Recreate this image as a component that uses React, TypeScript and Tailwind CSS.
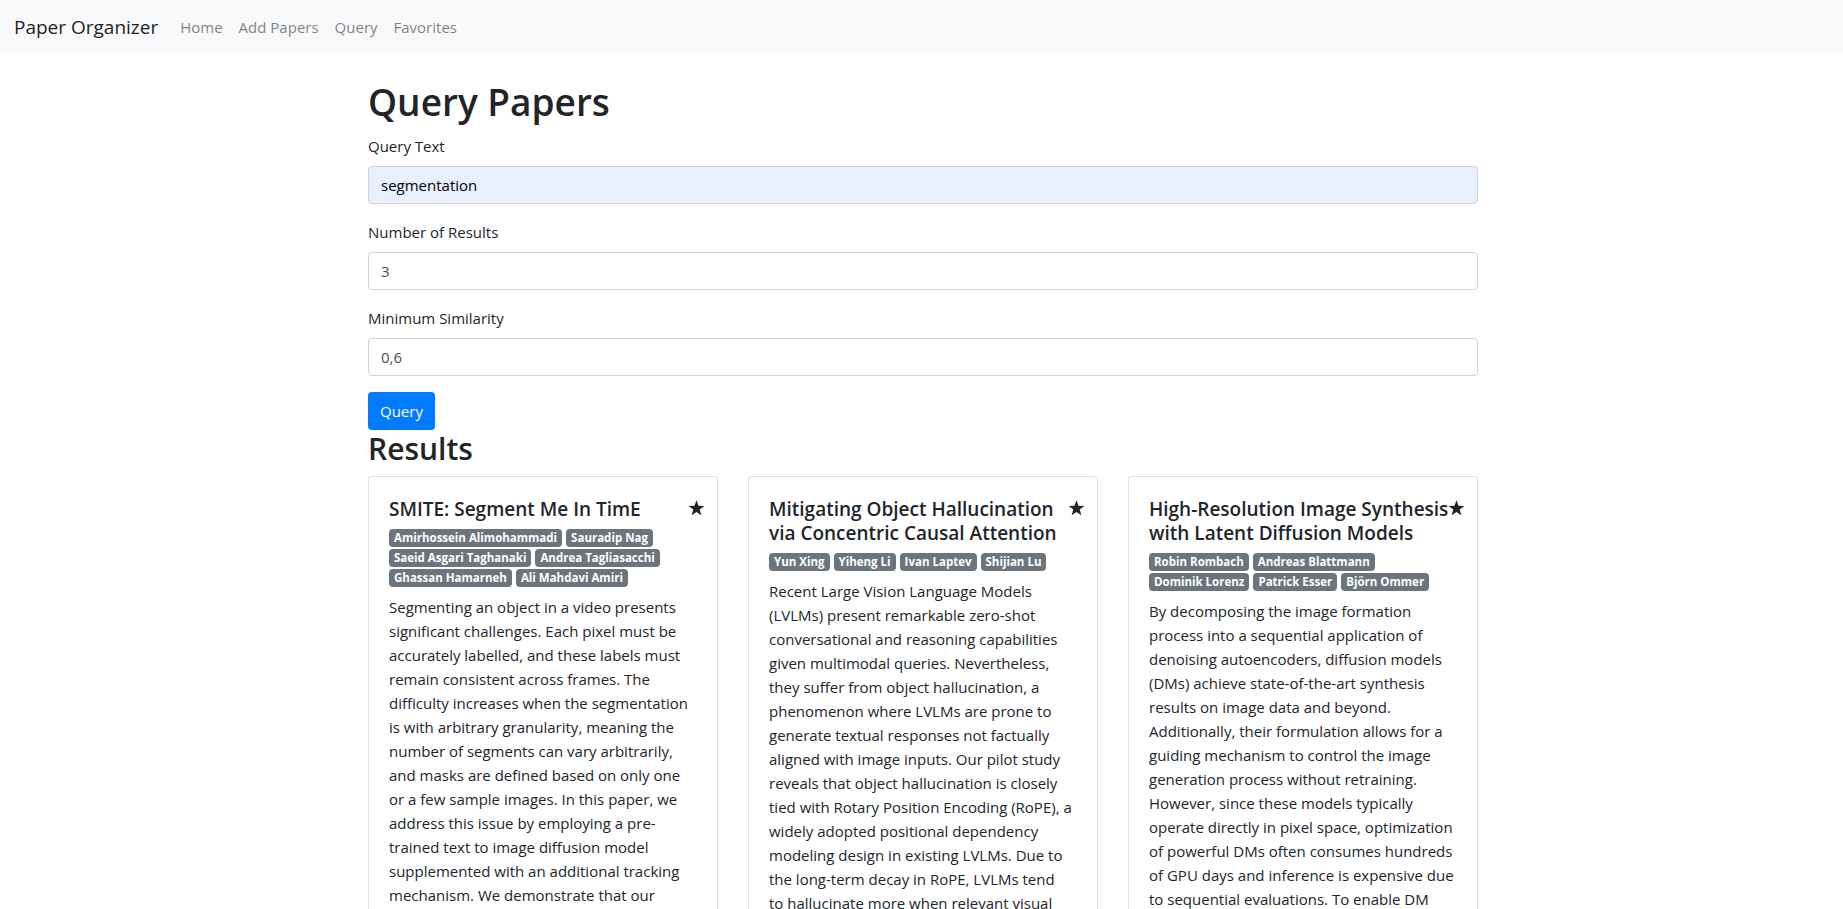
import React from "react";

type Paper = {
  title: string[];
  authors: string[][];
  lines: string[];
};

const papers: Paper[] = [
  {
    title: ["SMITE: Segment Me In TimE"],
    authors: [
      ["Amirhossein Alimohammadi", "Sauradip Nag"],
      ["Saeid Asgari Taghanaki", "Andrea Tagliasacchi"],
      ["Ghassan Hamarneh", "Ali Mahdavi Amiri"],
    ],
    lines: [
      "Segmenting an object in a video presents",
      "significant challenges. Each pixel must be",
      "accurately labelled, and these labels must",
      "remain consistent across frames. The",
      "difficulty increases when the segmentation",
      "is with arbitrary granularity, meaning the",
      "number of segments can vary arbitrarily,",
      "and masks are defined based on only one",
      "or a few sample images. In this paper, we",
      "address this issue by employing a pre-",
      "trained text to image diffusion model",
      "supplemented with an additional tracking",
      "mechanism. We demonstrate that our",
      "approach can effectively manage various",
      "segmentation scenarios and outperforms",
      "state-of-the-art alternatives.",
    ],
  },
  {
    title: ["Mitigating Object Hallucination", "via Concentric Causal Attention"],
    authors: [["Yun Xing", "Yiheng Li", "Ivan Laptev", "Shijian Lu"]],
    lines: [
      "Recent Large Vision Language Models",
      "(LVLMs) present remarkable zero-shot",
      "conversational and reasoning capabilities",
      "given multimodal queries. Nevertheless,",
      "they suffer from object hallucination, a",
      "phenomenon where LVLMs are prone to",
      "generate textual responses not factually",
      "aligned with image inputs. Our pilot study",
      "reveals that object hallucination is closely",
      "tied with Rotary Position Encoding (RoPE), a",
      "widely adopted positional dependency",
      "modeling design in existing LVLMs. Due to",
      "the long-term decay in RoPE, LVLMs tend",
      "to hallucinate more when relevant visual",
      "cues are distant from instruction tokens",
      "in the multimodal input sequence.",
    ],
  },
  {
    title: ["High-Resolution Image Synthesis", "with Latent Diffusion Models"],
    authors: [
      ["Robin Rombach", "Andreas Blattmann"],
      ["Dominik Lorenz", "Patrick Esser", "Björn Ommer"],
    ],
    lines: [
      "By decomposing the image formation",
      "process into a sequential application of",
      "denoising autoencoders, diffusion models",
      "(DMs) achieve state-of-the-art synthesis",
      "results on image data and beyond.",
      "Additionally, their formulation allows for a",
      "guiding mechanism to control the image",
      "generation process without retraining.",
      "However, since these models typically",
      "operate directly in pixel space, optimization",
      "of powerful DMs often consumes hundreds",
      "of GPU days and inference is expensive due",
      "to sequential evaluations. To enable DM",
      "training on limited computational",
      "resources while retaining their quality",
      "and flexibility, we apply them in the",
    ],
  },
];

function Star() {
  return (
    <svg width="17" height="16" viewBox="0 0 24 23" className="absolute right-[12px] top-[23px]">
      <polygon
        points="12,0.5 14.9,8.4 23.3,8.6 16.6,13.8 19,21.9 12,17.1 5,21.9 7.4,13.8 0.7,8.6 9.1,8.4"
        fill="#212529"
      />
    </svg>
  );
}

function Card({ p }: { p: Paper }) {
  return (
    <div className="relative flex-1 min-w-0 rounded-[4px] border border-black/[0.125] bg-white px-5 pt-5 pb-5">
      <Star />
      <h5 className="mb-2 text-[19px] font-semibold leading-[24px] text-[#212529]">
        {p.title.map((t, i) => (
          <span key={i} className="block whitespace-nowrap">
            {t}
          </span>
        ))}
      </h5>
      <div className="mb-2 flex flex-col gap-[2px]">
        {p.authors.map((row, i) => (
          <div key={i} className="flex gap-[4px]">
            {row.map((a) => (
              <span
                key={a}
                className="inline-flex h-[18px] items-center rounded-[4px] bg-[#6c757d] px-[5px] text-[11.5px] font-bold leading-none text-white"
              >
                {a}
              </span>
            ))}
          </div>
        ))}
      </div>
      <p className="text-[15px] leading-[24px] text-[#212529]">
        {p.lines.map((l, i) => (
          <span key={i} className="block whitespace-nowrap">
            {l}
          </span>
        ))}
      </p>
    </div>
  );
}

function Field({ label, value, autofill }: { label: string; value: string; autofill?: boolean }) {
  return (
    <div className="mb-4">
      <label className="mb-2 block text-[15px] leading-[24px] text-[#212529]">{label}</label>
      <div
        className={
          "flex h-[38px] items-center rounded-[4px] border border-[#ced4da] px-3 text-[15px] " +
          (autofill ? "bg-[#e8f0fe] text-black" : "bg-white text-[#495057]")
        }
      >
        {value}
      </div>
    </div>
  );
}

export default function App() {
  return (
    <div className="min-h-screen bg-white font-['Open_Sans',sans-serif] text-[#212529]">
      <nav className="flex h-[53px] items-center bg-[#f8f9fa] pl-[14px] pr-4">
        <span className="mr-[14px] text-[19px] leading-[30px] text-black/90">Paper Organizer</span>
        <div className="flex">
          {["Home", "Add Papers", "Query", "Favorites"].map((l) => (
            <span key={l} className="px-2 text-[15px] leading-[24px] text-black/50">
              {l}
            </span>
          ))}
        </div>
      </nav>
      <div className="mx-auto mt-[25px] w-[1113px] pl-[3px]">
        <h1 className="mb-2 text-[37px] font-semibold leading-[48px]">Query Papers</h1>
        <Field label="Query Text" value="segmentation" autofill />
        <Field label="Number of Results" value="3" />
        <Field label="Minimum Similarity" value="0,6" />
        <button className="h-[38px] rounded-[4px] bg-[#007bff] px-3 text-[15px] text-white">Query</button>
        <h2 className="mb-2 text-[30px] font-semibold leading-[38px]">Results</h2>
        <div className="flex gap-[30px]">
          {papers.map((p, i) => (
            <Card key={i} p={p} />
          ))}
        </div>
      </div>
    </div>
  );
}
